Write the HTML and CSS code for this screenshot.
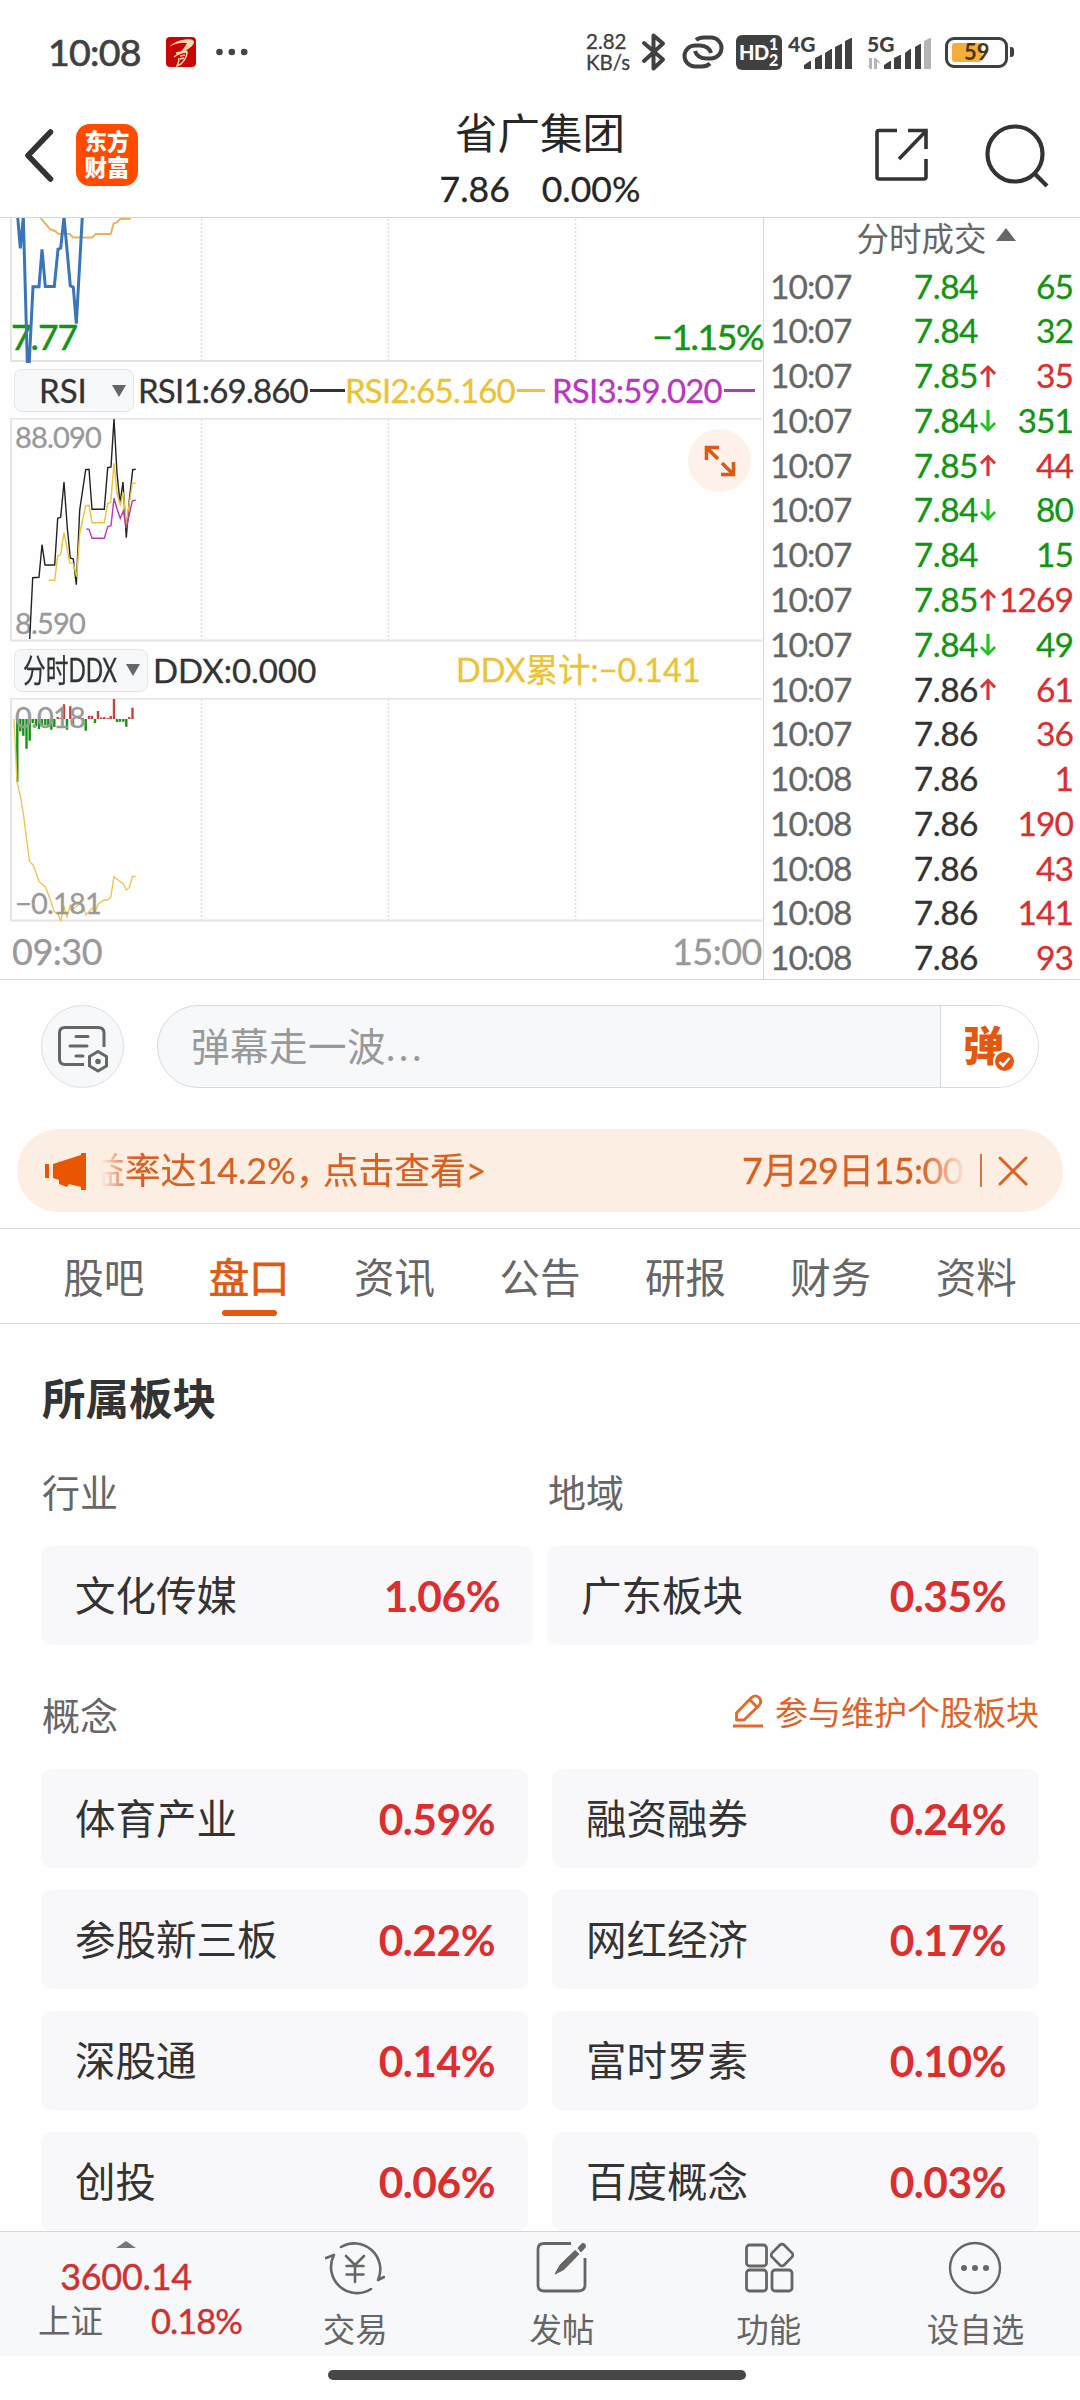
FILE: index.html
```html
<!DOCTYPE html>
<html lang="zh-CN">
<head>
    <meta charset="UTF-8">
    <meta name="viewport" content="width=device-width, initial-scale=1.0">
    <title>省广集团</title>
    <link rel="stylesheet" href="styles.css">
</head>
<body>

<div class="status-bar">
    <span class="clock">10:08</span>
    <svg class="app-badge" width="30" height="30" viewBox="0 0 30 30">
        <rect width="30" height="30" rx="4" fill="#cb0404"/>
        <path d="M3 10Q10 3 19 2.500Q29 1.500 28 6Q26 11 13 17Q19 10 21 6Q12 5 3 10Z" fill="#fbd9b0"/>
        <path d="M10 16L21 14M8 20Q14 15 21 15Q21 21 15 27L11 29Q13 25 13 21M14 19L19 18M14 22L18 21" fill="none" stroke="#fbd9b0" stroke-width="1.500"/>
    </svg>
    <svg class="more-dots" width="32" height="8" viewBox="0 0 32 8" fill="#444">
        <circle cx="3.500" cy="4" r="3.300"/><circle cx="15.800" cy="4" r="3.300"/><circle cx="28.200" cy="4" r="3.300"/>
    </svg>
    <div class="net-speed"><span>2.82</span><span>KB/s</span></div>
    <svg class="bluetooth" width="26" height="40" viewBox="0 0 26 40" fill="none" stroke="#404040" stroke-width="4" stroke-linejoin="round" stroke-linecap="round">
        <path d="M3 11L22 27.500L12.500 36.500V3.500L22 11.500L3 29"/>
    </svg>
    <svg class="chain" width="42" height="34" viewBox="0 0 42 34" fill="none" stroke="#404040" stroke-width="4">
        <path d="M14 5Q17 2.500 22 2.500H29A10.500 10.500 0 0 1 29 23.500H24Q15 23 13 16"/>
        <path d="M28 28.500Q25 31.500 20 31.500H13A10.500 10.500 0 0 1 13 10.500H18Q27 11 29 18"/>
    </svg>
    <div class="hd"><span class="hd-text">HD</span><span class="hd-sim"><i>1</i><i>2</i></span></div>
    <div class="signal signal-4g">
        <span class="net">4G</span>
        <svg width="48" height="32" viewBox="0 0 48 32" fill="#404040">
            <path d="M0 31V27L6 23H7V31ZM11 31V20L17 17H18V31ZM21 31V15L27 11H28V31ZM31 31V9L37 6H38V31ZM41 31V3L47 0H48V31Z"/>
        </svg>
    </div>
    <div class="signal signal-5g">
        <span class="net">5G</span>
        <svg width="66" height="32" viewBox="0 0 66 32" fill="#404040">
            <path d="M0 25L4 29V20H7V31H5ZM9 31V20H11L16 26L12 24V31Z" fill="#b5b5b5"/>
            <path d="M19 31V27L25 23H26V31ZM29 31V20L35 17H36V31ZM40 31V15L45 11H46V31ZM50 31V9L55 6H56V31Z"/>
            <path d="M59 31V3L65 0H66V31Z" fill="#b5b5b5"/>
        </svg>
    </div>
    <div class="battery"><span class="battery-fill"></span><span class="battery-num">59</span></div>
    <span class="battery-tip"></span>
</div>

<header class="header">
    <svg class="back" width="32" height="54" viewBox="0 0 32 54" fill="none" stroke="#333" stroke-width="5.500" stroke-linecap="round" stroke-linejoin="round">
        <path d="M27.500 4L5 27.500L27.500 51"/>
    </svg>
    <div class="logo"><span>东方</span><span>财富</span></div>
    <div class="stock">
        <h1>省广集团</h1>
        <div class="quote"><span>7.86</span><span>0.00%</span></div>
    </div>
    <svg class="share" width="54" height="54" viewBox="0 0 54 54" fill="none" stroke="#333" stroke-width="3.600">
        <path d="M22 2.500H4Q2 2.500 2 4.500V49Q2 51 4 51H49Q51 51 51 49V31M33 2.500H51V21M51 3L24 31"/>
    </svg>
    <svg class="search" width="64" height="64" viewBox="0 0 64 64" fill="none" stroke="#333" stroke-width="4.200">
        <circle cx="30" cy="30" r="27.500"/>
        <path d="M49 49L62 62"/>
    </svg>
</header>

<section class="market">
    <div class="charts">
        <div class="chart chart-price">
            <svg width="763" height="145" viewBox="0 218 763 145" fill="none">
                <path class="grid" d="M201.500 219V361M388.500 219V361M575.500 219V361"/>
                <path class="frame" d="M11 218V361H762"/>
            </svg>
            <span class="label low">7.77</span>
            <span class="label low-pct">−1.15%</span>
            <svg class="over" width="763" height="145" viewBox="0 218 763 145" fill="none">
                <polyline stroke="#e9b45e" stroke-width="2" points="40.700,218 50.300,229.300 55,231 58.300,233.700 69.700,234 73,237.500 92.300,237.500 95.700,234 110.700,234 113.700,223.300 116.700,222.500 120.300,219 131,218.700"/>
                <polyline stroke="#3a75b8" stroke-width="3" points="17.700,217 20.300,248.300 23.300,217 27.300,361.500 29.300,361.500 33,286.700 39,286.700 42,249.300 45.300,286.500 54.300,286.500 58,249.300 60.700,248 64,217 70.300,285.700 73.300,287.300 76.300,323.700 82.300,217"/>
            </svg>
        </div>
        <div class="indicator">
            <button class="picker">RSI<i class="caret"></i></button>
            <span class="rsi rsi1">RSI1:69.860<i></i></span>
            <span class="rsi rsi2">RSI2:65.160<i></i></span>
            <span class="rsi rsi3">RSI3:59.020<i></i></span>
        </div>
        <div class="chart chart-rsi">
            <svg width="763" height="224" viewBox="0 418 763 224" fill="none">
                <path class="grid" d="M201.500 419V640M388.500 419V640M575.500 419V640"/>
                <path class="frame" d="M762 418.500H11V640.500H762"/>
            </svg>
            <span class="label max">88.090</span>
            <span class="label min">8.590</span>
            <svg class="over" width="763" height="224" viewBox="0 418 763 224" fill="none" stroke-width="1.400">
                <polyline stroke="#222" points="29.700,639 32.700,577.700 39,577.300 42,544.700 45,565 54.700,565 57.700,518.300 60.700,517.300 64,482 67.300,528 70.300,558 73.300,559 76.300,584.700 79.700,510 85.700,469.700 89,469.300 92,509.300 104.300,509.300 107.700,467.700 111,467 114,419 117,473 120,503 123,482 126.300,537.700 129.300,500 132.700,469.700 135.700,469.300"/>
                <polyline stroke="#eac336" points="48.700,580.300 54.700,580 57.700,555.700 60.700,554.700 64,532.700 69.700,562.700 73.300,563.700 76.700,576.700 79.700,533.300 85.700,505.700 89,505.300 92,522.700 104.300,522.700 107.700,503.300 110.700,502.300 114,463.300 117,493.300 120.300,504.700 123.300,492.300 126.300,523.300 132.300,483.300 135.700,483"/>
                <polyline stroke="#b836c0" points="86.300,529 89,529.300 92,538.300 104.300,538.300 107.700,526.700 111,525.700 114,498.300 117,509 120.300,518.300 123.300,511 126.300,528.300 132.300,501 135.700,500"/>
            </svg>
            <button class="expand">
                <svg width="32" height="32" viewBox="0 0 32 32" fill="none" stroke="#dd5a16" stroke-width="3.600">
                    <path d="M15 2.500H2.500V15M3 3L14 14M17 29.500H29.500V17M29 29L18 18"/>
                </svg>
            </button>
        </div>
        <div class="indicator">
            <button class="picker picker-ddx"><span>分时DDX</span><i class="caret"></i></button>
            <span class="ddx">DDX:0.000</span>
            <span class="ddx-sum">DDX累计:−0.141</span>
        </div>
        <div class="chart chart-ddx">
            <svg width="763" height="224" viewBox="0 698 763 224" fill="none">
                <path class="grid" d="M201.500 699V920M388.500 699V920M575.500 699V920"/>
                <path class="frame" d="M762 698.500H11V920.500H762"/>
                <path stroke="#149414" stroke-width="2.400" d="M17.300 719V781.700M20.300 719V731.300M23.300 719V735.700M26.500 719V748.700M29.700 719V740.700M32.700 719V723M36 719V726M39 719V729M42 719V726M45.300 719V725M48.300 719V727M51.300 719V729.700M54.300 719V727M67 719V729.700M73 719V726M85.700 719V730.700M95 719V723M117 719V722M120 719V721.700M123.300 719V721.700M126.300 719V726.700"/>
                <path stroke="#c84040" stroke-width="2.400" d="M57.700 719V717M60.700 719V718M64 719V704.300M70.300 719V706.300M79.300 719V716M82.700 719V718M89 719V715.700M92 719V715.700M98 719V711M101.300 719V717.500M104.300 719V717M107.700 719V718M110.700 719V716M114 719V699M129.300 719V717M132.500 719V707.700"/>
                <polyline stroke="#eac755" stroke-width="1.400" points="14,719 17,781.700 20.300,795.700 23.300,813.300 26.700,840 29.700,861.700 33,865 36,872.300 39,881.700 45.300,886.700 48.300,894.300 54.300,911.700 58.300,914.300 60.700,921 64,906.700 67,916.700 70.300,905 73.300,909 79.300,904 82.300,904 86,915 92,908.300 95,912 98,904.300 104.300,899.700 107.700,900 110.700,897.300 114,876.700 120,881.700 123.300,883.700 126.300,890 129.300,887.700 132.300,876.700 135.700,876.300"/>
            </svg>
            <span class="label max">0.018</span>
            <span class="label min">−0.181</span>
        </div>
        <div class="time-axis"><span>09:30</span><span>15:00</span></div>
    </div>

    <div class="ticks">
        <div class="ticks-head">分时成交<i></i></div>
        <div class="tick"><span>10:07</span><b class="green">7.84</b><i></i><em class="green">65</em></div>
        <div class="tick"><span>10:07</span><b class="green">7.84</b><i></i><em class="green">32</em></div>
        <div class="tick"><span>10:07</span><b class="green">7.85</b><i class="up"></i><em class="red">35</em></div>
        <div class="tick"><span>10:07</span><b class="green">7.84</b><i class="down"></i><em class="green">351</em></div>
        <div class="tick"><span>10:07</span><b class="green">7.85</b><i class="up"></i><em class="red">44</em></div>
        <div class="tick"><span>10:07</span><b class="green">7.84</b><i class="down"></i><em class="green">80</em></div>
        <div class="tick"><span>10:07</span><b class="green">7.84</b><i></i><em class="green">15</em></div>
        <div class="tick"><span>10:07</span><b class="green">7.85</b><i class="up"></i><em class="red">1269</em></div>
        <div class="tick"><span>10:07</span><b class="green">7.84</b><i class="down"></i><em class="green">49</em></div>
        <div class="tick"><span>10:07</span><b>7.86</b><i class="up"></i><em class="red">61</em></div>
        <div class="tick"><span>10:07</span><b>7.86</b><i></i><em class="red">36</em></div>
        <div class="tick"><span>10:08</span><b>7.86</b><i></i><em class="red">1</em></div>
        <div class="tick"><span>10:08</span><b>7.86</b><i></i><em class="red">190</em></div>
        <div class="tick"><span>10:08</span><b>7.86</b><i></i><em class="red">43</em></div>
        <div class="tick"><span>10:08</span><b>7.86</b><i></i><em class="red">141</em></div>
        <div class="tick"><span>10:08</span><b>7.86</b><i></i><em class="red">93</em></div>
    </div>
</section>

<div class="danmu">
    <button class="danmu-settings">
        <svg width="52" height="48" viewBox="0 0 52 48" fill="none" stroke="#666" stroke-width="3">
            <path d="M27 39.500H8Q2.500 39.500 2.500 34V8Q2.500 2.500 8 2.500H41Q47 2.500 47 8V22" />
            <path d="M19 11.500H31M13 21H30M19 31H26" stroke-linecap="round"/>
            <path d="M41 26.500L49.500 31.500V41L41 46L32.500 41V31.500Z"/>
            <circle cx="41" cy="36.500" r="2.800" fill="#666" stroke="none"/>
        </svg>
    </button>
    <div class="danmu-input">
        <span class="placeholder">弹幕走一波<span>...</span></span>
        <button class="danmu-send">
            <span>弹</span>
            <svg width="23" height="23" viewBox="0 0 23 23" fill="none">
                <circle cx="11.500" cy="11.500" r="10.500" fill="#e2580f" stroke="#fff" stroke-width="2"/>
                <path d="M6.500 12L10 15.500L16.500 8" stroke="#fff" stroke-width="2.600"/>
            </svg>
        </button>
    </div>
</div>

<div class="notice">
    <svg class="horn" width="42" height="38" viewBox="0 0 42 38" fill="#ea5504">
        <path d="M0 12H4V26H0ZM8 12L36 3V1H41V38H36V35L24 32L22 35L14 32V28L8 26Z"/>
    </svg>
    <div class="marquee"><span class="marquee-text">益率达14.2%<i>，</i>点击查看&gt;</span><span class="marquee-date">7月29日15:00</span></div>
    <span class="notice-line"></span>
    <svg class="close" width="30" height="30" viewBox="0 0 30 30" fill="none" stroke="#e0601c" stroke-width="3" stroke-linecap="round">
        <path d="M2 2L28 28M28 2L2 28"/>
    </svg>
</div>

<nav class="tabs">
    <a>股吧</a>
    <a class="active">盘口</a>
    <a>资讯</a>
    <a>公告</a>
    <a>研报</a>
    <a>财务</a>
    <a>资料</a>
</nav>

<main class="sectors">
    <h2>所属板块</h2>
    <div class="cards cards-top">
        <h3>行业</h3>
        <h3>地域</h3>
        <div class="card"><span>文化传媒</span><b>1.06%</b></div>
        <div class="card"><span>广东板块</span><b>0.35%</b></div>
    </div>
    <div class="concept-head">
        <h3>概念</h3>
        <a class="edit">
            <svg width="32" height="34" viewBox="0 0 32 34" fill="none" stroke="#e4682a" stroke-width="2.800" stroke-linejoin="round">
                <path d="M1 32H31" stroke-width="3"/>
                <path d="M4.500 26V19L19 4Q23 0 27 3.500Q30.500 7.500 27 11.500L12 26ZM18 6L25 13"/>
            </svg>
            参与维护个股板块
        </a>
    </div>
    <div class="cards cards-concept">
        <div class="card"><span>体育产业</span><b>0.59%</b></div>
        <div class="card"><span>融资融券</span><b>0.24%</b></div>
        <div class="card"><span>参股新三板</span><b>0.22%</b></div>
        <div class="card"><span>网红经济</span><b>0.17%</b></div>
        <div class="card"><span>深股通</span><b>0.14%</b></div>
        <div class="card"><span>富时罗素</span><b>0.10%</b></div>
        <div class="card"><span>创投</span><b>0.06%</b></div>
        <div class="card"><span>百度概念</span><b>0.03%</b></div>
    </div>
</main>

<footer class="bottom-nav">
    <div class="index">
        <i></i>
        <strong>3600.14</strong>
        <div class="index-row"><span>上证</span><em>0.18%</em></div>
    </div>
    <a class="nav-item">
        <svg width="60" height="56" viewBox="0 0 60 56" fill="none" stroke="#666" stroke-width="2.600" stroke-linecap="round" stroke-linejoin="round">
            <path d="M16 7A26 26 0 0 1 53 40L59 37M46 49A26 26 0 0 1 9 15L1 18"/>
            <path d="M21 16L30 25L39 16M30 25V42M21.500 26H38.500M21.500 34.500H38.500"/>
        </svg>
        <span>交易</span>
    </a>
    <a class="nav-item">
        <svg width="52" height="56" viewBox="0 0 52 56" fill="none" stroke="#666" stroke-width="2.800">
            <path d="M35 3.500H8Q2 3.500 2 9.500V45Q2 51 8 51H42Q49 51 49 45V18"/>
            <path d="M19 34L24 25L39 10.500L43 14L28 29.500ZM42 8L46 3.500Q50 3 49.500 7L45 12Z" fill="#666" stroke-width="1"/>
        </svg>
        <span>发帖</span>
    </a>
    <a class="nav-item">
        <svg width="50" height="56" viewBox="0 0 50 56" fill="none" stroke="#666" stroke-width="2.800">
            <rect x="2.500" y="5" width="20" height="21" rx="3"/>
            <rect x="2.500" y="30" width="20" height="21" rx="3"/>
            <rect x="28" y="30" width="20" height="21" rx="3"/>
            <rect x="29.500" y="6.500" width="17" height="17" rx="3" transform="rotate(45 38 15)"/>
        </svg>
        <span>功能</span>
    </a>
    <a class="nav-item">
        <svg width="54" height="56" viewBox="0 0 54 56" fill="none" stroke="#666" stroke-width="2.400">
            <circle cx="27" cy="28" r="25"/>
            <g fill="#666" stroke="none"><circle cx="16" cy="28" r="3"/><circle cx="27" cy="28" r="3"/><circle cx="38" cy="28" r="3"/></g>
        </svg>
        <span>设自选</span>
    </a>
</footer>
<div class="home-bar"></div>

</body>
</html>
```
FILE: styles.css
```css
* {
    box-sizing: border-box;
}

body {
    display: flex;
    flex-direction: column;
    width: 1080px;
    height: 2400px;
    margin: 0;
    overflow: hidden;
    background: #fefefe;
    color: #333;
    font-family: Lato, "Noto Sans CJK SC", sans-serif;
    line-height: 1;
}

h1, h2, h3 {
    margin: 0;
    font-weight: 400;
}

i, em {
    font-style: normal;
}

button {
    padding: 0;
    border: none;
    background: none;
    color: inherit;
    font: inherit;
}

svg {
    display: block;
    flex: none;
}

.green {
    color: #149414;
}

.red {
    color: #d63030;
}

/* status bar */
.status-bar {
    display: flex;
    align-items: center;
    height: 104px;
    padding-left: 48px;
    color: #404040;
}

.clock {
    width: 118px;
    font-size: 37.500px;
    letter-spacing: -0.7px;
    -webkit-text-stroke: 0.7px;
}

.more-dots {
    margin: 0 338px 0 20px;
}

.net-speed {
    display: flex;
    flex-direction: column;
    width: 55px;
    font-size: 20.500px;
    -webkit-text-stroke: 0.3px;
    line-height: 21px;
}

.chain {
    margin-left: 15px;
}

.hd {
    display: flex;
    align-items: center;
    width: 46px;
    height: 35px;
    margin-left: 12px;
    padding-left: 3px;
    border-radius: 6px;
    background: #404040;
    color: #fff;
    font-weight: 900;
}

.hd-text {
    width: 30px;
    font-size: 20px;
    letter-spacing: -0.5px;
}

.hd-sim {
    display: flex;
    flex-direction: column;
    font-size: 16px;
    line-height: 16px;
}

.signal {
    position: relative;
    display: flex;
    justify-content: flex-end;
    height: 35px;
}

.signal-4g {
    width: 64px;
    margin-left: 6px;
}

.signal-5g {
    width: 66px;
    margin-left: 13px;
}

.signal svg {
    margin-top: 3px;
}

.net {
    position: absolute;
    top: -2px;
    left: 0;
    font-size: 21px;
    font-weight: 900;
}

.signal-5g .net {
    left: 2px;
}

.battery {
    display: flex;
    align-items: center;
    position: relative;
    width: 63px;
    height: 31px;
    margin-left: 14px;
    padding-left: 4px;
    border: 3px solid #404040;
    border-radius: 9px;
}

.battery-fill {
    width: 30px;
    height: 19px;
    border-radius: 3px;
    background: #f5ae3c;
}

.battery-num {
    position: absolute;
    left: 16px;
    font-size: 22px;
    font-weight: 700;
    color: #4a3510;
}

.battery-tip {
    width: 4px;
    height: 10px;
    margin-left: 2px;
    border-radius: 0 3px 3px 0;
    background: #404040;
}

/* header */
.header {
    display: flex;
    align-items: center;
    height: 114px;
    padding: 0 31px 11px 23px;
    border-bottom: 1px solid #d4d6d9;
}

.logo {
    display: flex;
    flex-direction: column;
    align-items: center;
    justify-content: center;
    width: 62px;
    height: 62px;
    margin-left: 21px;
    border-radius: 14px;
    background: #ff4a00;
    color: #fff;
    font-size: 22.500px;
    font-weight: 900;
    line-height: 26px;
}

.stock {
    flex: 1;
    display: flex;
    flex-direction: column;
    align-items: center;
    padding-left: 67px;
    padding-top: 8px;
    gap: 16px;
    color: #262626;
}

.stock h1 {
    font-size: 42.500px;
}

.quote {
    display: flex;
    gap: 32px;
    font-size: 35.500px;
    -webkit-text-stroke: 0.3px;
}

.share {
    margin-right: 56px;
}

.search {
    margin-top: 1px;
}

/* charts and tick list */
.market {
    display: flex;
    height: 762px;
    border-bottom: 1px solid #d4d6d9;
}

.charts {
    width: 764px;
    border-right: 1px solid #d4d6d9;
}

.chart {
    position: relative;
}

.chart-price {
    height: 145px;
}

.chart-rsi,
.chart-ddx {
    height: 224px;
}

.grid {
    stroke: #dedede;
    stroke-width: 1.500;
    stroke-dasharray: 2 2;
}

.frame {
    stroke: #e3e3e3;
    stroke-width: 1.800;
}

.over {
    position: absolute;
    top: 0;
    left: 0;
}

.label {
    position: absolute;
    left: 15px;
    color: #999;
    font-size: 29px;
    letter-spacing: -0.8px;
    -webkit-text-stroke: 0.3px;
}

.label.max {
    top: 4px;
}

.label.min {
    bottom: 5px;
}

.label.low,
.label.low-pct {
    top: 101px;
    left: 11px;
    color: #149414;
    font-size: 35.500px;
    -webkit-text-stroke: 0.5px;
    letter-spacing: -1px;
}

.label.low-pct {
    right: 0;
    left: auto;
    letter-spacing: -1.4px;
}

.indicator {
    display: flex;
    align-items: center;
    height: 55px;
    padding-left: 14px;
    font-size: 33px;
    -webkit-text-stroke: 0.3px;
}

.chart-rsi + .indicator {
    height: 56px;
}

.picker {
    display: flex;
    align-items: center;
    justify-content: space-between;
    width: 120px;
    height: 43px;
    padding: 0 7px 0 24px;
    border: 1px solid #e3e5ea;
    border-radius: 8px;
    background: #f7f8fa;
}

.picker-ddx {
    width: 134px;
    padding-left: 8px;
}

.picker-ddx span {
    width: 94px;
    font-size: 32px;
    white-space: nowrap;
    transform: scaleX(0.71);
    transform-origin: left;
}

.caret {
    border: 7px solid transparent;
    border-top: 12px solid #666;
    border-bottom: none;
}

.rsi {
    display: flex;
    align-items: center;
    margin-left: 4px;
    width: 207px;
    letter-spacing: -0.8px;
}

.rsi i {
    flex: 1;
    height: 2.500px;
    margin-left: 2px;
    background: currentColor;
}

.rsi2 {
    width: 200px;
    margin-left: 0;
    color: #eac336;
}

.rsi3 {
    width: 203px;
    margin-left: 7px;
    color: #b836c0;
}

.ddx {
    width: 303px;
    margin-left: 5px;
}

.ddx-sum {
    color: #eac336;
    font-size: 32.500px;
}

.expand {
    position: absolute;
    top: 11px;
    right: 12px;
    display: flex;
    align-items: center;
    justify-content: center;
    width: 63px;
    height: 63px;
    border-radius: 50%;
    background: #fef1ea;
}

.time-axis {
    display: flex;
    justify-content: space-between;
    padding: 11px 1px 0 12px;
    color: #999;
    font-size: 36px;
    letter-spacing: -0.5px;
    -webkit-text-stroke: 0.3px;
}

.ticks {
    flex: 1;
}

.ticks-head {
    display: flex;
    justify-content: center;
    gap: 9px;
    height: 46px;
    padding: 5px 0 0 28px;
    color: #666;
    font-size: 32.500px;
}

.ticks-head i {
    height: 0;
    margin-top: 5px;
    border: 10px solid transparent;
    border-top: none;
    border-bottom: 13px solid #666;
}

.tick {
    display: grid;
    grid-template-columns: 100px 108px 20px 75px;
    align-items: center;
    height: 44.770px;
    padding-left: 6px;
    font-size: 33.500px;
    letter-spacing: -0.9px;
    -webkit-text-stroke: 0.3px;
}

.tick span {
    color: #666;
}

.tick b {
    font-weight: 400;
    text-align: right;
    letter-spacing: -0.5px;
}

.tick em {
    text-align: right;
}

.up,
.down {
    justify-self: center;
    width: 16px;
    height: 22px;
    background: #dc3434;
    clip-path: polygon(50% 0, 100% 36%, 88% 46%, 60% 24%, 60% 100%, 40% 100%, 40% 24%, 12% 46%, 0 36%);
}

.down {
    background: #1fc21f;
    transform: scaleY(-1);
}

/* danmu input */
.danmu {
    display: flex;
    justify-content: space-between;
    padding: 25px 41px 0;
}

.danmu-settings {
    display: flex;
    align-items: center;
    justify-content: center;
    width: 83px;
    height: 83px;
    padding-top: 4px;
    border: 1px solid #dcdee2;
    border-radius: 50%;
    background: #f7f8fa;
}

.danmu-input {
    display: flex;
    align-items: center;
    width: 882px;
    height: 83px;
    border: 1px solid #d6d9dd;
    border-radius: 42px;
    background: #f7f8fa;
    overflow: hidden;
}

.placeholder {
    flex: 1;
    padding-left: 33px;
    color: #999;
    font-size: 38.500px;
    letter-spacing: 0.5px;
}

.placeholder span {
    letter-spacing: 4px;
}

.danmu-send {
    position: relative;
    width: 98px;
    height: 100%;
    padding: 0 12px 3px 0;
    border-left: 1px solid #d6d9dd;
    background: #fefefe;
    color: #e2580f;
    font-size: 41px;
    font-weight: 900;
}

.danmu-send svg {
    position: absolute;
    top: 44px;
    left: 52px;
}

/* scrolling notice */
.notice {
    display: flex;
    align-items: center;
    height: 83px;
    margin: 41px 17px 16px;
    padding: 0 35px 0 28px;
    border-radius: 42px;
    background: #fdeee4;
    color: #d9601f;
    font-size: 35.800px;
}

.marquee {
    display: flex;
    justify-content: space-between;
    width: 868px;
    height: 40px;
    margin-left: 10px;
    line-height: 40px;
    overflow: hidden;
    white-space: nowrap;
    -webkit-mask-image: linear-gradient(90deg, transparent 4px, #000 36px, #000 825px, transparent 870px);
    mask-image: linear-gradient(90deg, transparent 4px, #000 36px, #000 825px, transparent 870px);
}

.marquee-text {
    margin-left: -8px;
    -webkit-text-stroke: 0.2px;
}

.marquee-text i {
    margin-right: -9px;
}

.marquee-date {
    letter-spacing: -0.5px;
    -webkit-text-stroke: 0.3px;
}

.notice-line {
    width: 2px;
    height: 33px;
    margin: 0 16px 0 17px;
    background: #d8763f;
}

/* tabs */
.tabs {
    display: flex;
    height: 96px;
    padding: 0 31px;
    border-top: 1px solid #d4d6d9;
    border-bottom: 1px solid #d4d6d9;
    color: #666;
    font-size: 40.500px;
}

.tabs a {
    flex: 1;
    display: flex;
    flex-direction: column;
    align-items: center;
    padding-top: 29px;
}

.tabs .active {
    color: #dd5a14;
    -webkit-text-stroke: 0.7px;
}

.tabs .active::after {
    content: "";
    width: 55px;
    height: 6px;
    margin-top: 11px;
    border-radius: 3px;
    background: #e2580f;
}

/* sectors */
.sectors {
    height: 907px;
    padding: 0 41px;
    overflow: hidden;
}

.sectors h2 {
    margin-top: 53px;
    padding-left: 1px;
    font-size: 43.500px;
    font-weight: 700;
}

.sectors h3 {
    padding-left: 1px;
    color: #666;
    font-size: 38px;
}

.cards {
    display: grid;
    grid-template-columns: 1fr 1fr;
}

.cards-top {
    column-gap: 14px;
    row-gap: 35px;
    margin-top: 52px;
}

.cards-concept {
    gap: 22px 24px;
    margin-top: 35px;
}

.card {
    display: flex;
    align-items: center;
    justify-content: space-between;
    height: 99px;
    padding: 2px 33px 0 34px;
    border-radius: 11px;
    background: #f8f8fa;
    font-size: 40.500px;
}

.card b {
    color: #dc2e2e;
    font-size: 42.500px;
    letter-spacing: -0.5px;
}

.concept-head {
    display: flex;
    align-items: center;
    justify-content: space-between;
    margin-top: 51px;
}

.edit {
    display: flex;
    align-items: center;
    gap: 11px;
    margin-top: -4px;
    height: 38px;
    color: #df6326;
    font-size: 33px;
}

.edit svg {
    margin-top: -4px;
}

/* bottom navigation */
.bottom-nav {
    display: flex;
    height: 125px;
    border-top: 1px solid #d4d6d9;
    background: #f7f8fa;
    color: #666;
}

.index {
    display: flex;
    flex-direction: column;
    align-items: center;
    width: 252px;
    padding-top: 9px;
}

.index i {
    border: 10px solid transparent;
    border-top: none;
    border-bottom: 7px solid #777;
}

.index strong {
    margin: 10px 0 10px;
    color: #cf3030;
    font-size: 36px;
    font-weight: 400;
    letter-spacing: -0.3px;
    -webkit-text-stroke: 0.4px;
}

.index-row {
    display: flex;
    align-items: center;
    align-self: flex-start;
    gap: 48px;
    padding-left: 38px;
    font-size: 32.500px;
}

.index em {
    color: #cf3030;
    font-size: 34.500px;
    letter-spacing: -1px;
    -webkit-text-stroke: 0.4px;
}

.nav-item {
    display: flex;
    flex-direction: column;
    align-items: center;
    gap: 18px;
    width: 206.700px;
    padding-top: 8px;
    font-size: 32.500px;
}

.home-bar {
    width: 418px;
    height: 10px;
    margin: 14px 0 0 328px;
    border-radius: 5px;
    background: #474747;
}
```
